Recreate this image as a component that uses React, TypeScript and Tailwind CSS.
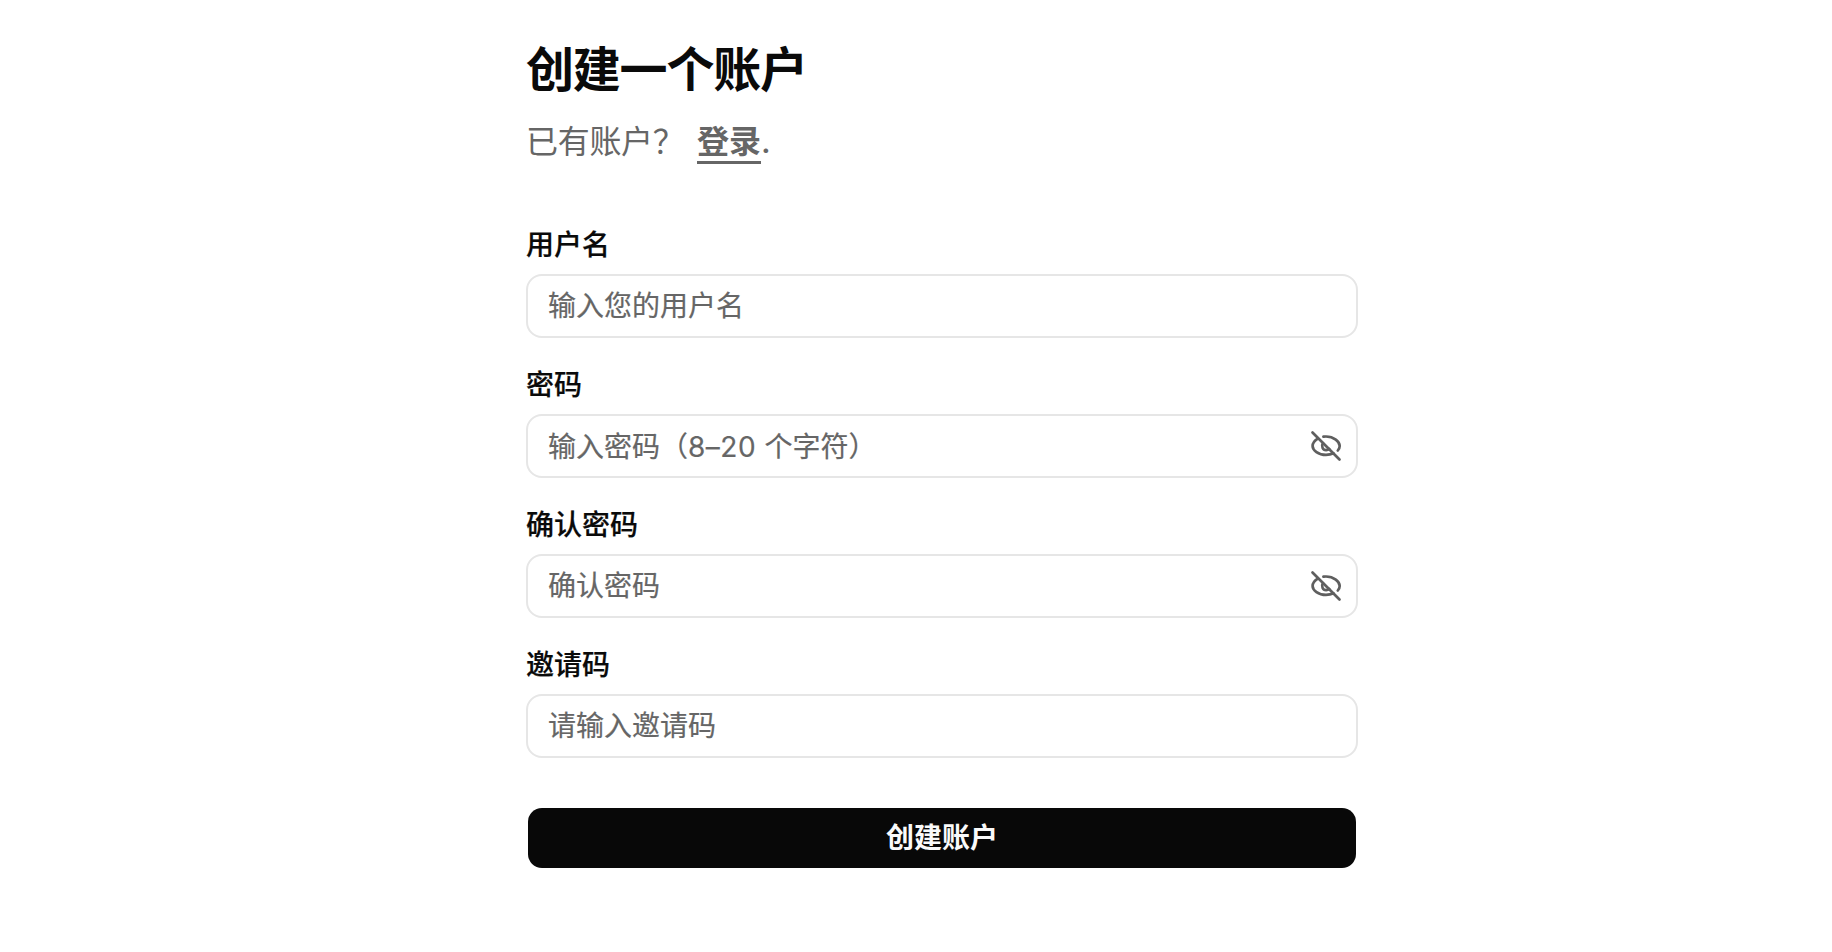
import type { ReactNode } from 'react';

function EyeOff() {
  return (
    <svg
      className="h-9 w-9 shrink-0"
      viewBox="0 0 36 36"
      fill="none"
      stroke="#5f5f5f"
      strokeWidth="2.7"
      strokeLinecap="round"
      strokeLinejoin="round"
    >
      <path d="M15.4 8.7C16.3 8.6 17.1 8.5 18 8.5C25.8 8.5 31.7 13.7 31.7 18C31.7 19.7 30.9 21.2 29.8 22.5" />
      <path d="M9.8 10.6C6.4 12.6 4.6 15.4 4.6 18C4.6 22.3 10.4 26.9 18 26.9C20.8 26.9 23.4 26.3 25.5 25.3" />
      <path d="M14.9 15.2C13.1 17.8 14.6 22.2 18.2 22.1C19.5 22.1 20.4 21.7 21.2 21" />
      <path d="M4.5 4.5L31.5 31.5" />
    </svg>
  );
}

function Field({ label, hint, secret }: { label: string; hint: ReactNode; secret?: boolean }) {
  return (
    <div className="flex flex-col">
      <div className="h-11 pb-2.5 text-[28px] leading-8 font-medium text-[#0a0a0a] [-webkit-text-stroke:0.2px_#0a0a0a]">
        {label}
      </div>
      <div className="flex h-16 items-center justify-between rounded-2xl border-2 border-[#e6e6e6] pr-3 pl-5">
        <span className="pt-0.5 text-[28px] leading-10 whitespace-pre text-[#666666] [-webkit-text-stroke:0.2px_#666666]">
          {hint}
        </span>
        {secret && <EyeOff />}
      </div>
    </div>
  );
}

export default function App() {
  return (
    <main className="min-h-[952px] bg-white pt-[41px] pl-[526px] font-['Liberation_Sans','Noto_Sans_CJK_SC',sans-serif]">
      <div className="flex w-[832px] flex-col">
        <h1 className="h-[60px] text-[48px] leading-[60px] font-bold tracking-[-0.025em] text-[#0a0a0a]">
          创建一个账户
        </h1>
        <p className="mt-[17px] flex h-[47px] text-[32px] leading-[48px] text-[#666666]">
          <span className="w-[171px] tracking-[-0.3px]">已有账户？</span>
          <a className="h-[46px] border-b-[3px] border-[#666666] font-bold">登录</a>
          <span className="font-['Inter'] font-medium">.</span>
        </p>
        <form className="mt-[65px] flex flex-col gap-8">
          <Field label="用户名" hint="输入您的用户名" />
          <Field
            label="密码"
            hint={
              <>
                输入密码（
                <span className="font-['Inter'] tracking-[0.5px]">8–20 </span>
                个字符）
              </>
            }
            secret
          />
          <Field label="确认密码" hint="确认密码" secret />
          <Field label="邀请码" hint="请输入邀请码" />
          <button
            type="button"
            className="mx-0.5 mt-[18px] h-[60px] rounded-[14px] bg-[#080808] pt-0.5 text-[28px] leading-[58px] font-bold text-[#fafafa]"
          >
            创建账户
          </button>
        </form>
      </div>
    </main>
  );
}
